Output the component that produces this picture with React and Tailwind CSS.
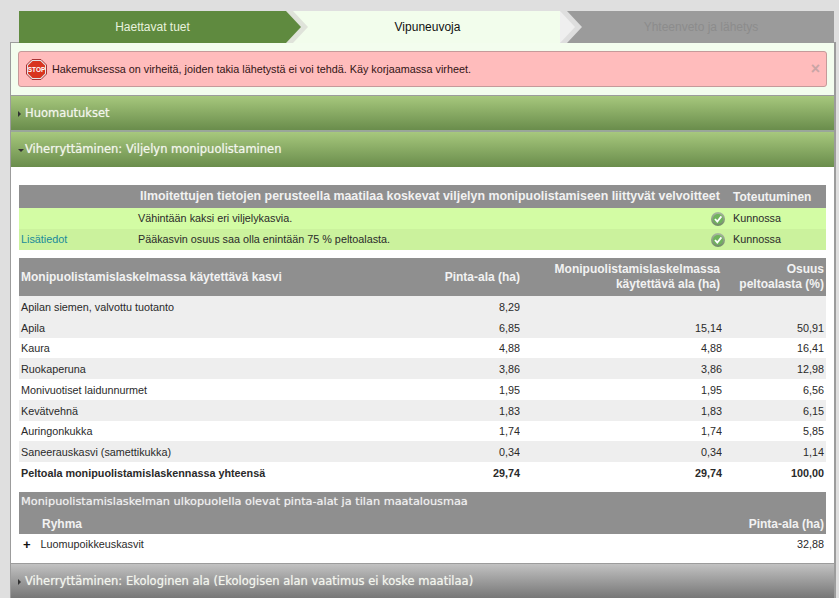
import { Fragment } from "react";

const rows = [
  ["Apilan siemen, valvottu tuotanto", "8,29", "", ""],
  ["Apila", "6,85", "15,14", "50,91"],
  ["Kaura", "4,88", "4,88", "16,41"],
  ["Ruokaperuna", "3,86", "3,86", "12,98"],
  ["Monivuotiset laidunnurmet", "1,95", "1,95", "6,56"],
  ["Kevätvehnä", "1,83", "1,83", "6,15"],
  ["Auringonkukka", "1,74", "1,74", "5,85"],
  ["Saneerauskasvi (samettikukka)", "0,34", "0,34", "1,14"],
];

function StepArrow({ fill, edge }) {
  return (
    <svg className="absolute left-full top-0 z-10" width="24" height="32" viewBox="0 0 24 32">
      <path d="M0 0 H7 L22 16 L7 32 H0 Z" fill={edge} />
      <path d="M0 0 L15 16 L0 32 Z" fill={fill} />
    </svg>
  );
}

function Check() {
  return (
    <svg width="14" height="14" viewBox="0 0 14 14" className="mr-[8px] shrink-0">
      <defs>
        <linearGradient id="chk" x1="0" y1="0" x2="0" y2="1">
          <stop offset="0" stopColor="#a9b8a0" />
          <stop offset="1" stopColor="#6f8a66" />
        </linearGradient>
      </defs>
      <circle cx="7" cy="7" r="7" fill="url(#chk)" />
      <circle cx="7" cy="7" r="5" fill="#6fb35c" />
      <path d="M4 7 L6.3 9.6 L10.4 4.4" fill="none" stroke="#fff" strokeWidth="1.8" />
    </svg>
  );
}

function StopIcon() {
  return (
    <svg width="21" height="21" viewBox="0 0 21 21" className="shrink-0">
      <polygon points="6,0.5 15,0.5 20.5,6 20.5,15 15,20.5 6,20.5 0.5,15 0.5,6" fill="#e4e4e4" stroke="#a33" />
      <polygon points="6.6,2 14.4,2 19,6.6 19,14.4 14.4,19 6.6,19 2,14.4 2,6.6" fill="#d8351f" />
      <text x="10.5" y="13" textAnchor="middle" fontSize="6.5" fontWeight="700" fill="#fff" fontFamily="Liberation Sans, sans-serif">STOP</text>
    </svg>
  );
}

function AccordionHeader({ title, open, gray, short }) {
  return (
    <div
      className={`flex items-center pl-[7px] font-['DejaVu_Sans',sans-serif] text-[11.5px] text-[#f2f5ec] [text-shadow:0_0_1px_rgba(255,255,255,0.6)] ${
        short ? "h-[34px] pt-[2px]" : "h-[35px] pt-[1px]"
      } ${
        gray
          ? "bg-gradient-to-b from-[#c2c2c2] to-[#757575]"
          : "bg-gradient-to-b from-[#a7c87d] to-[#6a8d4c]"
      }`}
    >
      {open ? (
        <span className="mr-[1px] h-0 w-0 border-x-[3px] border-t-[3px] border-x-transparent border-t-[#333]" />
      ) : (
        <span className="mr-[4px] h-0 w-0 border-y-[3px] border-l-[3px] border-y-transparent border-l-[#333]" />
      )}
      {title}
    </div>
  );
}

export default function App() {
  return (
    <div className="h-[598px] w-[839px] overflow-hidden bg-[#dfdfdf] pl-[10px] pr-[3px] pt-[11px] font-['Liberation_Sans',sans-serif] text-[10.8px] text-[#2a2a2a]">
      {/* steps */}
      <div className="relative z-10 -mb-px ml-[9px] flex h-[32px] w-[815px] text-[12px]">
        <div className="relative flex w-[268px] items-center justify-center border-r border-[#c9d8b8] bg-[#5f8a3f] text-[#e8f2dd]">
          Haettavat tuet
          <StepArrow fill="#5f8a3f" edge="#dfe3da" />
        </div>
        <div className="relative flex w-[273px] items-center justify-center bg-[#f2fdec] pl-[8px] text-[#111]">
          Vipuneuvoja
          <StepArrow fill="#efefef" edge="#dedede" />
        </div>
        <div className="flex flex-1 items-center justify-center bg-[#9b9b9b] pl-[8px] text-[#8c8c8c]">
          Yhteenveto ja lähetys
        </div>
      </div>

      <div className="border border-r-2 border-b-0 border-[#9c9c9c] bg-white">
        <div className="bg-[#f3fdee] px-[7px] py-[8px]">
          <div className="flex h-[36px] items-center gap-[5px] rounded-[3px] border border-[#c59a9a] bg-[#ffbcbc] pl-[7px] pr-[6px] text-[#331414]">
            <StopIcon />
            <span className="flex-1">Hakemuksessa on virheitä, joiden takia lähetystä ei voi tehdä. Käy korjaamassa virheet.</span>
            <span className="text-[16px] font-bold leading-none text-[#c9a5a5]">×</span>
          </div>
        </div>
        <div className="border-t border-[#9c9c9c]">
          <AccordionHeader title="Huomautukset" short />
        </div>
        <div className="border-t-2 border-[#9aa69a]">
          <AccordionHeader title="Viherryttäminen: Viljelyn monipuolistaminen" open />
        </div>

        <div className="h-[396px] px-[8px] pt-[18px]">
          {/* velvoitteet */}
          <div className="grid h-[23px] grid-cols-[121px_1fr_93px] items-center bg-[#8f8f8f] text-[12.4px] font-bold text-[#f2f2f2]">
            <span />
            <span>Ilmoitettujen tietojen perusteella maatilaa koskevat viljelyn monipuolistamiseen liittyvät velvoitteet</span>
            <span className="text-[12px]">Toteutuminen</span>
          </div>
          <div className="grid h-[21px] grid-cols-[119px_1fr_115px] items-center bg-[#d3fca4]">
            <span />
            <span>Vähintään kaksi eri viljelykasvia.</span>
            <span className="flex items-center"><Check />Kunnossa</span>
          </div>
          <div className="grid h-[21px] grid-cols-[119px_1fr_115px] items-center bg-[#cbf29d]">
            <span className="pl-[2px] text-[#1a8a9a]">Lisätiedot</span>
            <span>Pääkasvin osuus saa olla enintään 75 % peltoalasta.</span>
            <span className="flex items-center"><Check />Kunnossa</span>
          </div>

          {/* kasvit */}
          <div className="mt-[8px] grid grid-cols-[1fr_103px_202px_104px]">
            <div className="flex h-[38px] items-center bg-[#8f8f8f] pl-[2px] text-[12px] font-bold text-[#f2f2f2]">Monipuolistamislaskelmassa käytettävä kasvi</div>
            <div className="flex items-center justify-end bg-[#8f8f8f] text-[12px] font-bold text-[#f2f2f2]">Pinta-ala (ha)</div>
            <div className="flex items-center justify-end bg-[#8f8f8f] pr-[2px] text-right text-[12px] font-bold leading-[15px] text-[#f2f2f2]">Monipuolistamislaskelmassa<br />käytettävä ala (ha)</div>
            <div className="flex items-center justify-end bg-[#8f8f8f] pr-[2px] text-right text-[12px] font-bold leading-[15px] text-[#f2f2f2]">Osuus<br />peltoalasta (%)</div>
            {rows.map((r, i) => {
              const bg = i === 0 || i % 2 === 1 ? "bg-[#eeeeee]" : "bg-white";
              return (
                <Fragment key={r[0]}>
                  <div className={`flex h-[20.75px] items-center pl-[2px] pt-px ${bg}`}>{r[0]}</div>
                  <div className={`flex items-center justify-end pt-px ${bg}`}>{r[1]}</div>
                  <div className={`flex items-center justify-end pt-px ${bg}`}>{r[2]}</div>
                  <div className={`flex items-center justify-end pr-[2px] pt-px ${bg}`}>{r[3]}</div>
                </Fragment>
              );
            })}
            <div className="flex h-[21px] items-center pl-[2px] pt-px font-bold">Peltoala monipuolistamislaskennassa yhteensä</div>
            <div className="flex items-center justify-end pt-px font-bold">29,74</div>
            <div className="flex items-center justify-end pt-px font-bold">29,74</div>
            <div className="flex items-center justify-end pr-[2px] pt-px font-bold">100,00</div>
          </div>

          {/* ulkopuolella */}
          <div className="mt-[9px] bg-[#8f8f8f] text-[#f2f2f2]">
            <div className="flex h-[21px] items-center pl-[2px] font-['DejaVu_Sans',sans-serif] text-[11.3px] [text-shadow:0_0_1px_rgba(255,255,255,0.5)]">Monipuolistamislaskelman ulkopuolella olevat pinta-alat ja tilan maatalousmaa</div>
            <div className="flex h-[21px] items-center justify-between pl-[23px] pr-[2px] text-[12px] font-bold">
              <span>Ryhma</span>
              <span>Pinta-ala (ha)</span>
            </div>
          </div>
          <div className="flex h-[21px] items-center justify-between pl-[4px] pr-[2px]">
            <span className="flex items-center gap-[10px]">
              <span className="text-[13px] font-bold leading-none text-[#111]">+</span>
              Luomupoikkeuskasvit
            </span>
            <span>32,88</span>
          </div>
        </div>
        <div className="border-t border-[#9c9c9c]">
          <AccordionHeader title="Viherryttäminen: Ekologinen ala (Ekologisen alan vaatimus ei koske maatilaa)" gray />
        </div>
      </div>
    </div>
  );
}
